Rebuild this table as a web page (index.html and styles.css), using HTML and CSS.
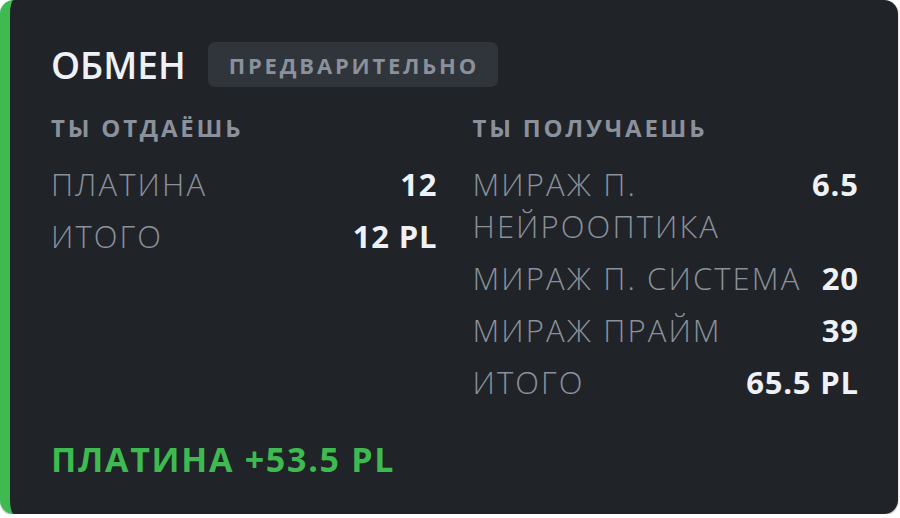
FILE: index.html
```html
<!DOCTYPE html>
<html lang="ru">
<head>
<meta charset="utf-8">
<link rel="stylesheet" href="styles.css">
</head>
<body>
<div class="card">
  <div class="header">
    <h1 class="title">ОБМЕН</h1>
    <span class="badge">ПРЕДВАРИТЕЛЬНО</span>
  </div>
  <div class="columns">
    <div class="col">
      <h2 class="col-title">ТЫ ОТДАЁШЬ</h2>
      <div class="rows">
        <div class="row"><span class="label">ПЛАТИНА</span><span class="value">12</span></div>
        <div class="row"><span class="label">ИТОГО</span><span class="value">12 PL</span></div>
      </div>
    </div>
    <div class="col">
      <h2 class="col-title">ТЫ ПОЛУЧАЕШЬ</h2>
      <div class="rows">
        <div class="row"><span class="label">МИРАЖ П. НЕЙРООПТИКА</span><span class="value">6.5</span></div>
        <div class="row"><span class="label">МИРАЖ П. СИСТЕМА</span><span class="value">20</span></div>
        <div class="row"><span class="label">МИРАЖ ПРАЙМ</span><span class="value">39</span></div>
        <div class="row"><span class="label">ИТОГО</span><span class="value">65.5 PL</span></div>
      </div>
    </div>
  </div>
  <div class="result">ПЛАТИНА +53.5 PL</div>
</div>
</body>
</html>
```
FILE: styles.css
```css
html, body {
  margin: 0;
  padding: 0;
  background: #ffffff;
}
body {
  font-family: "Open Sans", "Noto Sans", sans-serif;
}
.card {
  box-sizing: border-box;
  width: 898px;
  height: 514px;
  background: #202328;
  border-left: 10px solid #3fba50;
  border-radius: 14px;
  box-shadow: 0 1px 2px rgba(0, 0, 0, 0.35);
  padding: 42px 40px 35px 41px;
  display: flex;
  flex-direction: column;
}
.header {
  display: flex;
  align-items: center;
  gap: 22px;
  height: 45px;
}
.title {
  margin: 0;
  font-size: 37px;
  font-weight: 600;
  line-height: 45px;
  color: #eef1f5;
}
.badge {
  display: inline-flex;
  align-items: center;
  height: 45px;
  box-sizing: border-box;
  padding: 0 19px 0 21px;
  background: #30343b;
  border-radius: 7px;
  color: #8a919b;
  font-size: 22px;
  font-weight: 700;
  letter-spacing: 2.8px;
}
.columns {
  display: grid;
  grid-template-columns: 1fr 1fr;
  column-gap: 36px;
  margin-top: 26px;
}
.col-title {
  margin: 0 0 20px;
  font-size: 24px;
  font-weight: 700;
  line-height: 30px;
  color: #8a919b;
  letter-spacing: 2.8px;
}
.rows {
  display: flex;
  flex-direction: column;
  gap: 10px;
}
.row {
  display: flex;
  justify-content: space-between;
  align-items: flex-start;
  gap: 12px;
  font-size: 31px;
  line-height: 42px;
}
.label {
  color: #8a919b;
  font-weight: 300;
  letter-spacing: 2.1px;
}
.value {
  color: #eef1f5;
  font-weight: 700;
  letter-spacing: 0.8px;
  margin-right: -0.8px;
  white-space: nowrap;
}
.result {
  margin-top: auto;
  font-size: 34px;
  font-weight: 700;
  line-height: 40px;
  color: #3fba50;
  letter-spacing: 1.7px;
}
```
